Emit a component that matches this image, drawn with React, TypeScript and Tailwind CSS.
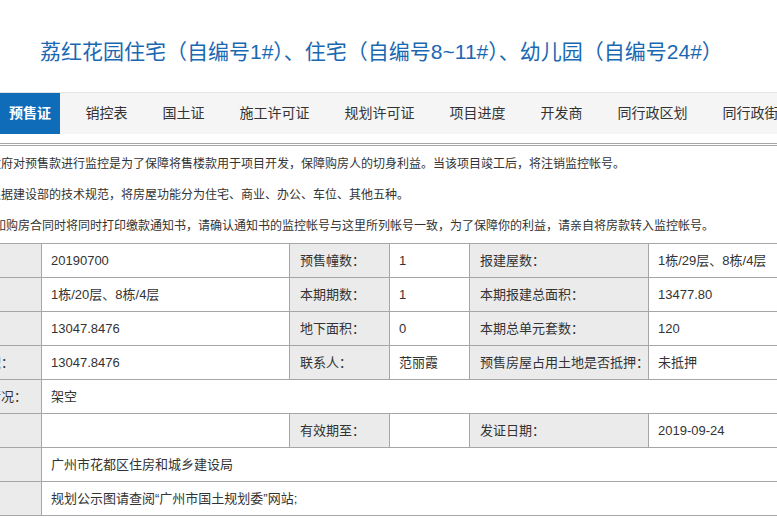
import React from "react";

const tabs = ["销控表", "国土证", "施工许可证", "规划许可证", "项目进度", "开发商", "同行政区划", "同行政街道"];

const L = "border border-[#a6a6a6] bg-[#ebebeb] px-[10px] h-[34px] align-middle whitespace-nowrap overflow-hidden";
const V = "border border-[#a6a6a6] bg-white px-[9px] h-[34px] align-middle whitespace-nowrap overflow-hidden";

export default function App() {
  return (
    <div
      className="w-[777px] h-[518px] overflow-hidden bg-white text-[#333]"
      style={{ fontFamily: '"Liberation Sans", "Noto Sans CJK SC", sans-serif' }}
    >
      <div className="h-[92px] pt-[38px] pl-[40px]">
        <h1 className="text-[21px] leading-[28px] text-[#1a68b2] whitespace-nowrap font-normal">
          荔红花园住宅（自编号1#）、住宅（自编号8~11#）、幼儿园（自编号24#）
        </h1>
      </div>

      <div className="flex h-[42px] bg-[#f5f5f5] border-t border-[#e3e3e3] text-[14px] whitespace-nowrap">
        <div className="w-[60px] shrink-0 flex items-center justify-center bg-[#0f6cb8] text-white font-bold">预售证</div>
        <div className="flex shrink-0 ml-[8px]">
          {tabs.map((t) => (
            <div key={t} className="px-[17.5px] shrink-0 flex items-center text-[#333]">
              {t}
            </div>
          ))}
        </div>
      </div>

      <div className="mt-[9px] border-t-[3px] border-double border-[#a6a6a6]" />

      <div className="text-[12px] leading-[31px] whitespace-nowrap pt-[3px]">
        <p className="-ml-[11px]">政府对预售款进行监控是为了保障将售楼款用于项目开发，保障购房人的切身利益。当该项目竣工后，将注销监控帐号。</p>
        <p className="-ml-[11px]">根据建设部的技术规范，将房屋功能分为住宅、商业、办公、车位、其他五种。</p>
        <p className="-ml-[6px]">如购房合同时将同时打印缴款通知书，请确认通知书的监控帐号与这里所列帐号一致，为了保障你的利益，请亲自将房款转入监控帐号。</p>
      </div>

      <table className="-ml-[75px] mt-[1px] w-[943px] table-fixed border-collapse text-[13px]">
        <colgroup>
          <col className="w-[116px]" />
          <col className="w-[248px]" />
          <col className="w-[100px]" />
          <col className="w-[80px]" />
          <col className="w-[179px]" />
          <col className="w-[220px]" />
        </colgroup>
        <tbody>
          <tr>
            <td className={L}>预售证号：</td>
            <td className={V}>20190700</td>
            <td className={L}>预售幢数：</td>
            <td className={V}>1</td>
            <td className={L}>报建屋数：</td>
            <td className={V}>1栋/29层、8栋/4层</td>
          </tr>
          <tr>
            <td className={L}>预售楼层：</td>
            <td className={V}>1栋/20层、8栋/4层</td>
            <td className={L}>本期期数：</td>
            <td className={V}>1</td>
            <td className={L}>本期报建总面积：</td>
            <td className={V}>13477.80</td>
          </tr>
          <tr>
            <td className={L}>预售面积：</td>
            <td className={V}>13047.8476</td>
            <td className={L}>地下面积：</td>
            <td className={V}>0</td>
            <td className={L}>本期总单元套数：</td>
            <td className={V}>120</td>
          </tr>
          <tr>
            <td className={L}>住宅总面积：</td>
            <td className={V}>13047.8476</td>
            <td className={L}>联系人：</td>
            <td className={V}>范丽霞</td>
            <td className={L}>预售房屋占用土地是否抵押：</td>
            <td className={V}>未抵押</td>
          </tr>
          <tr>
            <td className={L}>首层架空情况：</td>
            <td className={V} colSpan={5}>架空</td>
          </tr>
          <tr>
            <td className={L}>有效期自：</td>
            <td className={V}></td>
            <td className={L}>有效期至：</td>
            <td className={V}></td>
            <td className={L}>发证日期：</td>
            <td className={V}>2019-09-24</td>
          </tr>
          <tr>
            <td className={L}>发证机关：</td>
            <td className={V} colSpan={5}>广州市花都区住房和城乡建设局</td>
          </tr>
          <tr>
            <td className={L}>备注：</td>
            <td className={V} colSpan={5}>规划公示图请查阅“广州市国土规划委”网站;</td>
          </tr>
        </tbody>
      </table>
    </div>
  );
}
